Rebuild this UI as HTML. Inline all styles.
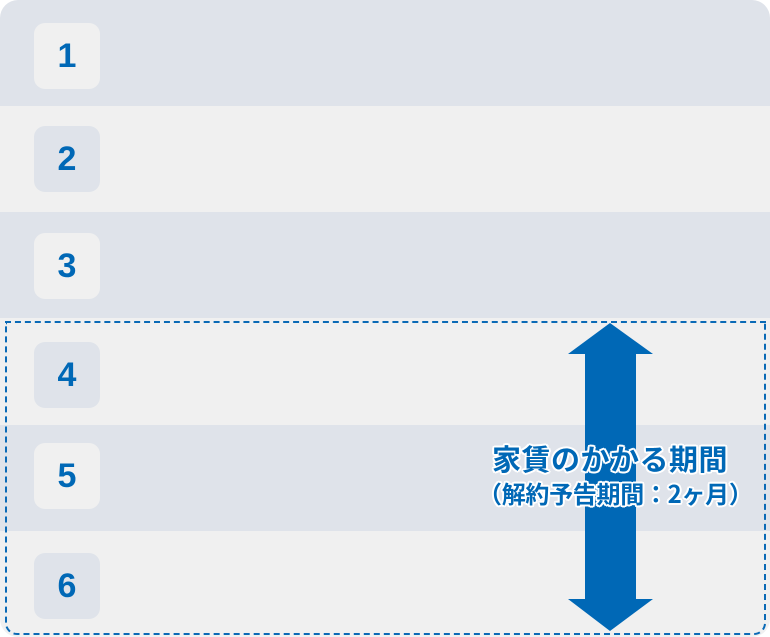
<!DOCTYPE html>
<html><head><meta charset="utf-8"><style>
body{margin:0;background:#fff;width:770px;height:637px;overflow:hidden;font-family:"Liberation Sans","Noto Sans CJK JP",sans-serif}
.wrap{position:absolute;left:0;top:0;width:770px;height:637px;border-radius:18px;overflow:hidden}
.row{position:absolute;left:0;width:770px}
.a{background:#dfe3ea}.b{background:#f0f0f0}
.badge{position:absolute;left:34px;width:66px;height:66px;border-radius:11px;color:#0068b6;font-weight:bold;font-size:34px;line-height:66px;text-align:center}
.dash{position:absolute;left:5px;top:321px;width:757px;height:310px;border:2px dashed #0a6ab6;border-radius:0 0 12px 12px;box-sizing:content-box}
.t{position:absolute;color:#0068b6;font-weight:bold;font-family:"Noto Sans CJK JP",sans-serif;white-space:nowrap;
text-shadow:2px 0 #fff,-2px 0 #fff,0 2px #fff,0 -2px #fff,1.5px 1.5px #fff,-1.5px 1.5px #fff,1.5px -1.5px #fff,-1.5px -1.5px #fff}
</style></head><body>
<div class="wrap">
<div class="row a" style="top:0;height:106px"></div>
<div class="row b" style="top:106px;height:106px"></div>
<div class="row a" style="top:212px;height:106px"></div>
<div class="row b" style="top:318px;height:107px"></div>
<div class="row a" style="top:425px;height:106px"></div>
<div class="row b" style="top:531px;height:106px"></div>
<div class="badge b" style="top:23px">1</div>
<div class="badge a" style="top:126px">2</div>
<div class="badge b" style="top:233px">3</div>
<div class="badge a" style="top:342px">4</div>
<div class="badge b" style="top:443px">5</div>
<div class="badge a" style="top:553px">6</div>
</div>
<div class="dash"></div>
<svg style="position:absolute;left:0;top:0" width="770" height="637">
<polygon fill="#0068b6" points="610,323 653,354 636,354 636,599 653,599 610,631 568,599 585,599 585,354 568,354"/>
</svg>
<div class="t" style="left:492px;top:440px;font-size:29px;line-height:36px;letter-spacing:0.5px">家賃のかかる期間</div>
<div class="t" style="left:478px;top:478px;font-size:24px;line-height:30px;letter-spacing:-0.3px">（解約予告期間：2ヶ月）</div>
</body></html>
